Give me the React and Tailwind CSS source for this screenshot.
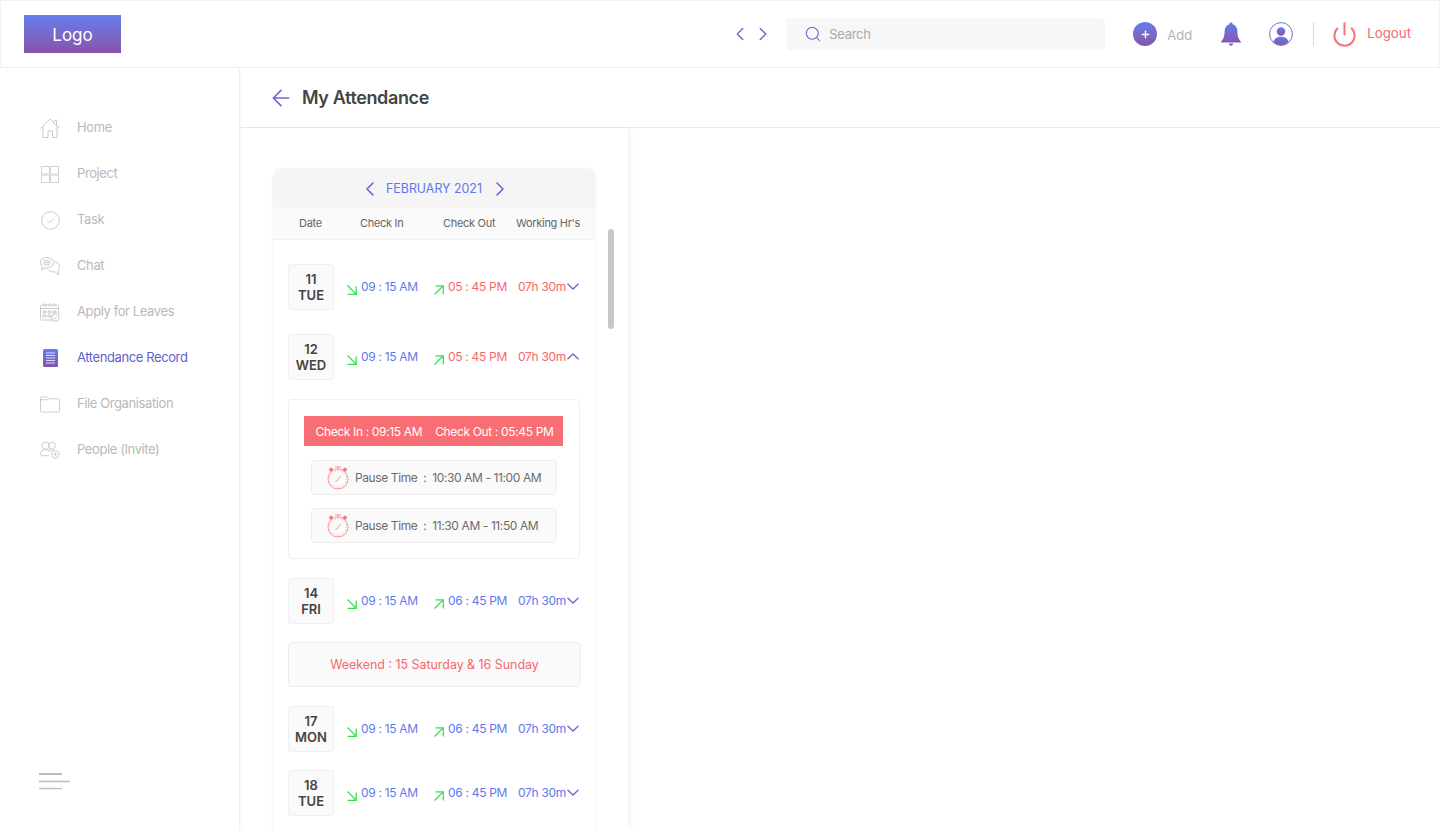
import React from 'react';
import { ChevronLeft, ChevronRight, Search, ArrowLeft, Plus, Power } from 'lucide-react';

function GradientDefs() {
  return (
    <svg width="0" height="0" className="absolute">
      <defs>
        <linearGradient id="brand" x1="0" y1="0" x2="0" y2="1">
          <stop offset="0" stopColor="#627ded" />
          <stop offset="1" stopColor="#8653a8" />
        </linearGradient>
      </defs>
    </svg>
  );
}

function HomeIcon() {
  return (
    <svg width="20" height="20" viewBox="0 0 20 20" fill="none" stroke="#c4c4c4" strokeWidth="0.9">
      <path d="M0.5 10.5 L10 1 L19.5 10.5 M3 8.5 V19.5 H8 V13 H12.5 V19.5 H17 V8.5 M13.5 3.5 L16.5 1.8 V7" />
    </svg>
  );
}

function GridIcon() {
  return (
    <svg width="18" height="17" viewBox="0 0 18 17" fill="none" stroke="#d2d2d2" strokeWidth="1">
      <path d="M0.5 0.5 H8.5 V8 H0.5 Z M9.5 0.5 H17.5 V8 H9.5 Z M0.5 9 H8.5 V16.5 H0.5 Z M9.5 9 H17.5 V16.5 H9.5 Z" />
    </svg>
  );
}

function TaskIcon() {
  return (
    <svg width="19" height="19" viewBox="0 0 19 19" fill="none" stroke="#c4c4c4" strokeWidth="0.9">
      <circle cx="9.5" cy="9.5" r="8.8" />
      <path d="M6.2 9.6 L8.6 11.6 L12.8 7.6" />
    </svg>
  );
}

function ChatIcon() {
  return (
    <svg width="20" height="19" viewBox="0 0 20 19" fill="none" stroke="#c4c4c4" strokeWidth="0.9">
      <path d="M7 0.5 C3 0.5 0.5 2.6 0.5 5.5 C0.5 7.6 1.4 9 2.2 9.6 L1.6 13 L5 11 C9.5 11.4 13.5 9.3 13.5 5.6 C13.5 2.6 11 0.5 7 0.5 Z" />
      <path d="M3.5 3.8 H10.5 M3 5.8 H11 M3.5 7.8 H10" />
      <path d="M15 4.6 C18 5.4 19.5 7.2 19.5 9.6 C19.5 11.2 18.8 12.4 18 13 L18.4 18 L15 14.8 C12 15.2 9 14.4 7.6 12" />
    </svg>
  );
}

function LeaveIcon() {
  return (
    <svg width="20" height="19" viewBox="0 0 20 19" fill="none" stroke="#c4c4c4" strokeWidth="0.9">
      <path d="M13 17 H2 C1 17 0.5 16.4 0.5 15.6 V3.5 C0.5 2.6 1 2 2 2 H17 C18 2 18.5 2.6 18.5 3.5 V11" />
      <path d="M0.5 5.5 H18.5" />
      <circle cx="5" cy="2" r="1.2" fill="#fff" />
      <circle cx="9.5" cy="2" r="1.2" fill="#fff" />
      <circle cx="14" cy="2" r="1.2" fill="#fff" />
      <path d="M3 8 H6 V10 H3 Z M8 8 H11 V10 H8 Z M13 8 H16 V10 H13 Z M3 12 H6 V14 H3 Z M8 12 H11 V14 H8 Z" />
      <circle cx="15.5" cy="14.5" r="3.8" fill="#fff" />
      <path d="M13.8 14.6 L15.1 15.8 L17.2 13.6" />
    </svg>
  );
}

function RecordIcon() {
  return (
    <svg width="15" height="18" viewBox="0 0 15 18">
      <rect width="15" height="18" rx="1.5" fill="url(#brand)" />
      <path d="M3 4 H12 M3 6.5 H12 M3 9 H12 M3 11.5 H12 M3 14 H12" stroke="#fff" strokeWidth="0.9" opacity="0.85" />
    </svg>
  );
}

function FolderIcon() {
  return (
    <svg width="21" height="17" viewBox="0 0 21 17" fill="none" stroke="#c4c4c4" strokeWidth="0.9">
      <path d="M0.5 1.5 C0.5 1 1 0.5 1.5 0.5 H8 L9.5 2.5 H19.5 C20 2.5 20.5 3 20.5 3.5 V15.5 C20.5 16 20 16.5 19.5 16.5 H1.5 C1 16.5 0.5 16 0.5 15.5 Z M0.5 3.5 H9" />
    </svg>
  );
}

function PeopleIcon() {
  return (
    <svg width="21" height="18" viewBox="0 0 21 18" fill="none" stroke="#c4c4c4" strokeWidth="0.9">
      <circle cx="6" cy="4.5" r="3.7" />
      <circle cx="12.5" cy="4.5" r="3.7" />
      <path d="M9.5 15 H2 C1 15 0.5 14.4 0.5 13.4 C0.5 10.6 2.6 8.8 5.5 8.8 C7.6 8.8 9 9.4 10 10.5" />
      <path d="M9 9.6 C10 8.9 11 8.8 12.5 8.8 C14 8.8 15.2 9.1 16 10" />
      <circle cx="16" cy="13.5" r="4" fill="#fff" />
      <path d="M16 11.5 V15.5 M14 13.5 H18" />
    </svg>
  );
}

function BellIcon() {
  return (
    <svg width="22" height="24" viewBox="0 0 22 24">
      <path
        d="M11 0.5 C12 0.5 12.6 1.2 12.6 2.2 C16 3.2 17.4 6 17.4 9.5 C17.4 14 18.4 17 20.8 19.6 V20.6 H1.2 V19.6 C3.6 17 4.6 14 4.6 9.5 C4.6 6 6 3.2 9.4 2.2 C9.4 1.2 10 0.5 11 0.5 Z M8.8 21.6 H13.2 C13 23 12.2 23.7 11 23.7 C9.8 23.7 9 23 8.8 21.6 Z"
        fill="url(#brand)"
      />
    </svg>
  );
}

function UserIcon() {
  return (
    <svg width="24" height="24" viewBox="0 0 24 24">
      <circle cx="12" cy="12" r="11.4" fill="none" stroke="url(#brand)" strokeWidth="1" />
      <circle cx="12" cy="9.5" r="4.2" fill="url(#brand)" />
      <path d="M4.6 20 C5.4 16.4 8 14.8 12 14.8 C16 14.8 18.6 16.4 19.4 20 C17.5 22 15 23 12 23 C9 23 6.5 22 4.6 20 Z" fill="url(#brand)" />
    </svg>
  );
}

function ClockIcon() {
  return (
    <svg width="22" height="24" viewBox="0 0 22 24" fill="none" stroke="#f7767c" strokeWidth="0.8">
      <circle cx="11" cy="13" r="10" />
      <circle cx="11" cy="13" r="8.2" strokeDasharray="0.8 2.4" />
      <path d="M8.5 16 L11 13.5 L13.5 10.5 M11 3 V1 M8 1 H14" />
      <circle cx="4" cy="3.6" r="1.6" fill="#f7767c" />
      <circle cx="18" cy="3.6" r="1.6" fill="#f7767c" />
    </svg>
  );
}

function InArrow() {
  return (
    <svg width="10" height="10" viewBox="0 0 10 10" fill="none" stroke="#37e05a" strokeWidth="1.3">
      <path d="M0.5 0.5 L9 9 M9.2 1.5 V9.3 H0.5" />
    </svg>
  );
}

function OutArrow() {
  return (
    <svg width="10" height="10" viewBox="0 0 10 10" fill="none" stroke="#37e05a" strokeWidth="1.3">
      <path d="M0.5 9.5 L9 1 M1.5 0.8 H9.3 V9.5" />
    </svg>
  );
}

function RowChevron({ up }) {
  return (
    <svg width="12" height="7" viewBox="0 0 12 7" fill="none" stroke="#6a67cf" strokeWidth="1.3" className="ml-px mb-px">
      <path d={up ? 'M0.5 6.2 L6 1 L11.5 6.2' : 'M0.5 0.8 L6 6 L11.5 0.8'} />
    </svg>
  );
}

function MenuIcon() {
  return (
    <svg width="32" height="18" viewBox="0 0 32 18" stroke="#bdbdbd">
      <path d="M0 1 H23" strokeWidth="2" />
      <path d="M0 8.5 H31" strokeWidth="1.6" />
      <path d="M0 15.5 H23" strokeWidth="1.4" />
    </svg>
  );
}

const navItems = [
  { label: 'Home', icon: <HomeIcon /> },
  { label: 'Project', icon: <GridIcon /> },
  { label: 'Task', icon: <TaskIcon /> },
  { label: 'Chat', icon: <ChatIcon /> },
  { label: 'Apply for Leaves', icon: <LeaveIcon /> },
  { label: 'Attendance Record', icon: <RecordIcon />, active: true },
  { label: 'File Organisation', icon: <FolderIcon /> },
  { label: 'People (Invite)', icon: <PeopleIcon /> },
];

function Header() {
  return (
    <header className="h-[68px] shrink-0 flex items-center pl-[23px] pr-[28px] bg-white border border-[#f2f2f2]">
      <div className="w-[97px] h-[38px] flex items-center justify-center pt-1 bg-gradient-to-b from-[#627ded] to-[#8653a8] text-white text-[17px]">
        Logo
      </div>
      <div className="ml-auto flex items-center">
        <ChevronLeft size={22} strokeWidth={1.5} className="text-[#6a67cf]" />
        <ChevronRight size={22} strokeWidth={1.5} className="ml-px text-[#6a67cf]" />
        <div className="ml-3 w-[319px] h-8 flex items-center pl-[18px] bg-[#f7f7f7] rounded">
          <Search size={18} strokeWidth={1.4} className="text-[#6a67cf]" />
          <span className="ml-[7px] pt-0.5 text-[13px] tracking-[-0.3px] text-[#a9a9a9]">Search</span>
        </div>
        <div className="ml-7 w-6 h-6 flex items-center justify-center rounded-full bg-gradient-to-b from-[#627ded] to-[#8653a8]">
          <Plus size={11} strokeWidth={3} className="text-white" />
        </div>
        <span className="ml-[10px] pt-1 text-[13px] text-[#b5b5b5]">Add</span>
        <div className="ml-7 flex"><BellIcon /></div>
        <div className="ml-[27px] flex"><UserIcon /></div>
        <div className="ml-5 w-px h-6 bg-[#d9d9d9]" />
        <Power size={27} strokeWidth={1.8} className="ml-[17px] text-[#f7767c]" />
        <span className="ml-[9px] text-[13.3px] text-[#f7676d]">Logout</span>
      </div>
    </header>
  );
}

function Sidebar() {
  return (
    <aside className="w-[240px] shrink-0 flex flex-col pt-[37px] pb-[39px] border-r border-[#f0f0f0] shadow-[1px_0_3px_rgba(0,0,0,0.03)]">
      {navItems.map((item) => (
        <div key={item.label} className="h-[46px] shrink-0 flex items-center pl-10">
          <div className="w-5 flex justify-center">{item.icon}</div>
          <span className={`ml-[17px] text-[13px] tracking-[-0.4px] ${item.active ? 'text-[#5f5fcf]' : 'text-[#b9b9b9]'}`}>
            {item.label}
          </span>
        </div>
      ))}
      <div className="mt-auto pl-[39px] flex">
        <MenuIcon />
      </div>
    </aside>
  );
}

function DayRow({ day, name, out, color, open, className }) {
  return (
    <div className={`flex items-center ${className || ''}`}>
      <div className="w-[46px] h-[46px] shrink-0 flex flex-col items-center justify-center bg-[#fafafa] border border-[#f0f0f0] rounded-[3px] text-[13px] leading-4 font-semibold text-[#444]">
        <span>{day}</span>
        <span>{name}</span>
      </div>
      <div className="ml-[13px] w-[86px] flex items-center">
        <span className="mt-[5px] flex"><InArrow /></span>
        <span className="ml-1 pb-px text-xs tracking-[-0.3px] text-[#5f78ee]">09 : 15 AM</span>
      </div>
      <div className="w-[85px] flex items-center">
        <span className="mt-[5px] ml-px flex"><OutArrow /></span>
        <span className="ml-1 pb-px text-xs tracking-[-0.3px]" style={{ color }}>{out}</span>
      </div>
      <span className="pb-px text-xs tracking-[-0.3px] whitespace-nowrap" style={{ color }}>07h 30m</span>
      <RowChevron up={open} />
    </div>
  );
}

function PauseRow({ time, className }) {
  return (
    <div className={`w-[246px] h-[35px] flex items-center pl-[15px] bg-[#fafafa] border border-[#ececec] rounded ${className || ''}`}>
      <ClockIcon />
      <span className="ml-[6px] text-xs tracking-[-0.4px] text-[#6b6b6b] whitespace-pre">{`Pause Time  :  ${time}`}</span>
    </div>
  );
}

function AttendanceCard() {
  return (
    <div className="w-[322px] h-[700px] bg-white rounded-t-lg shadow-[0_0_3px_rgba(0,0,0,0.08)]">
      <div className="h-[38px] flex items-center justify-center pt-0.5 pl-0.5 bg-[#f5f5f5] rounded-t-lg">
        <ChevronLeft size={24} strokeWidth={1.6} className="text-[#6a67cf]" />
        <span className="ml-1 mr-[6px] text-[12.4px] text-[#5f78ee]">FEBRUARY 2021</span>
        <ChevronRight size={24} strokeWidth={1.6} className="text-[#6a67cf]" />
      </div>
      <div className="h-[33px] flex items-center bg-[#fafafa] border-b border-[#f2f2f2] text-[11px] tracking-[-0.3px] text-[#666]">
        <span className="ml-[26px] w-[61px]">Date</span>
        <span className="w-[83px]">Check In</span>
        <span className="w-[73px]">Check Out</span>
        <span>Working Hr's</span>
      </div>
      <div className="pl-[15px] pt-6">
        <DayRow day="11" name="TUE" out="05 : 45 PM" color="#f7676d" />
        <DayRow day="12" name="WED" out="05 : 45 PM" color="#f7676d" open className="mt-6" />
        <div className="mt-[19px] w-[292px] h-[160px] flex flex-col items-center pt-4 border border-[#f0f0f0] rounded">
          <div className="w-[259px] h-[30px] mr-[2px] flex items-center justify-center gap-[13px] pl-[3px] pt-px bg-[#f76e74] text-xs tracking-[-0.35px] text-white">
            <span>Check In : 09:15 AM</span>
            <span>Check Out : 05:45 PM</span>
          </div>
          <PauseRow time="10:30 AM - 11:00 AM" className="mt-[14px]" />
          <PauseRow time="11:30 AM - 11:50 AM" className="mt-[13px]" />
        </div>
        <DayRow day="14" name="FRI" out="06 : 45 PM" color="#5f78ee" className="mt-[19px]" />
        <div className="mt-[18px] w-[293px] h-[45px] flex items-center justify-center pt-0.5 bg-[#fafafa] border border-[#ececec] rounded text-[12.4px] text-[#f7676d]">
          Weekend : 15 Saturday &amp; 16 Sunday
        </div>
        <DayRow day="17" name="MON" out="06 : 45 PM" color="#5f78ee" className="mt-[19px]" />
        <DayRow day="18" name="TUE" out="06 : 45 PM" color="#5f78ee" className="mt-[18px]" />
      </div>
    </div>
  );
}

export default function App() {
  return (
    <div className="w-[1440px] h-[830px] flex flex-col overflow-hidden bg-white font-['Inter',sans-serif]">
      <GradientDefs />
      <Header />
      <div className="flex-1 flex min-h-0">
        <Sidebar />
        <main className="flex-1 flex flex-col min-w-0">
          <div className="h-[60px] shrink-0 flex items-center pl-7 border-b border-[#ececec]">
            <ArrowLeft size={26} strokeWidth={1.5} className="text-[#6a67cf]" />
            <h1 className="ml-2 text-lg tracking-[-0.38px] font-semibold text-[#444]">My Attendance</h1>
          </div>
          <div className="relative flex-1 w-[388px] pt-[41px] pl-[33px] overflow-hidden shadow-[3px_0_4px_rgba(0,0,0,0.04)]">
            <AttendanceCard />
            <div className="absolute left-[368px] top-[101px] w-[6px] h-[100px] rounded-full bg-[#c8c8c8]" />
          </div>
        </main>
      </div>
    </div>
  );
}
